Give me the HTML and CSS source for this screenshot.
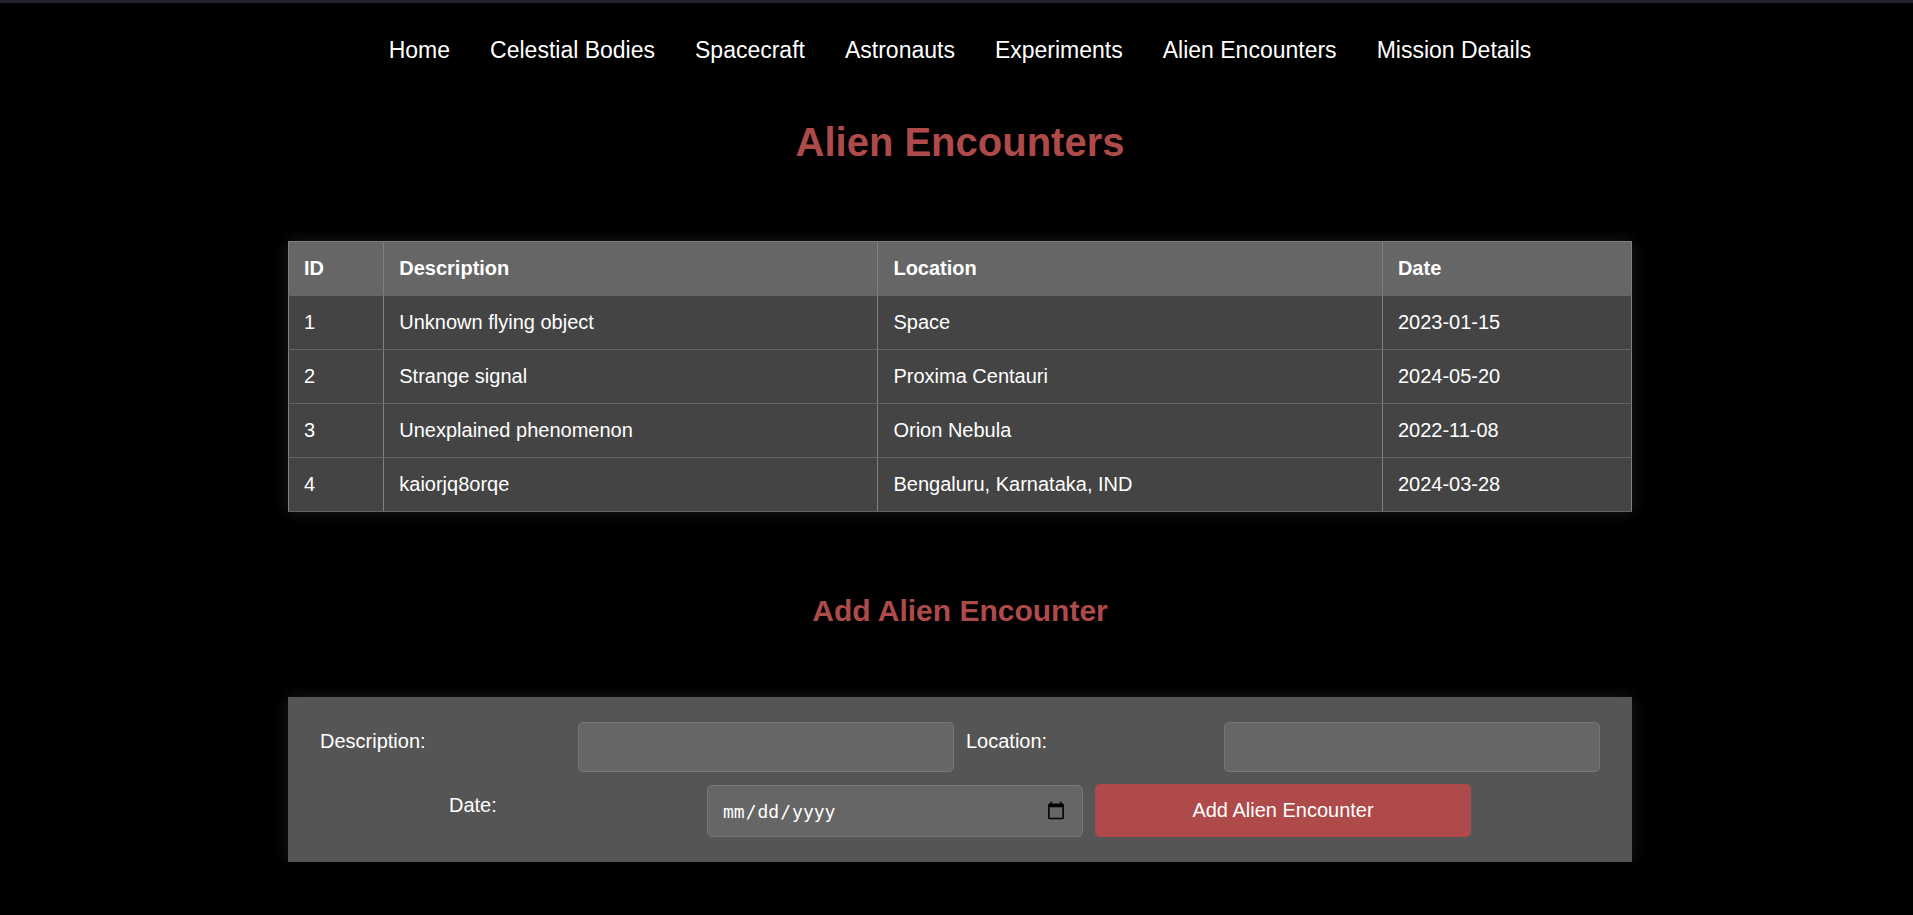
FILE: index.html
```html
<!DOCTYPE html>
<html lang="en">
<head>
<meta charset="utf-8">
<title>Alien Encounters</title>
<link rel="stylesheet" href="styles.css">
</head>
<body>
<header class="site-header">
  <nav class="nav">
    <a href="#">Home</a>
    <a href="#">Celestial Bodies</a>
    <a href="#">Spacecraft</a>
    <a href="#">Astronauts</a>
    <a href="#">Experiments</a>
    <a href="#">Alien Encounters</a>
    <a href="#">Mission Details</a>
  </nav>
</header>
<main class="content">
  <h1 class="title">Alien Encounters</h1>
  <table class="encounters">
    <thead>
      <tr><th>ID</th><th>Description</th><th>Location</th><th>Date</th></tr>
    </thead>
    <tbody>
      <tr><td>1</td><td>Unknown flying object</td><td>Space</td><td>2023-01-15</td></tr>
      <tr><td>2</td><td>Strange signal</td><td>Proxima Centauri</td><td>2024-05-20</td></tr>
      <tr><td>3</td><td>Unexplained phenomenon</td><td>Orion Nebula</td><td>2022-11-08</td></tr>
      <tr><td>4</td><td>kaiorjq8orqe</td><td>Bengaluru, Karnataka, IND</td><td>2024-03-28</td></tr>
    </tbody>
  </table>
  <h2 class="subtitle">Add Alien Encounter</h2>
  <form class="form">
    <label class="label" for="description">Description:</label>
    <input class="field" type="text" id="description">
    <label class="label" for="location">Location:</label>
    <input class="field" type="text" id="location">
    <label class="label" for="date">Date:</label>
    <input class="field field-date" type="date" id="date">
    <button class="submit" type="submit">Add Alien Encounter</button>
  </form>
</main>
</body>
</html>
```
FILE: styles.css
```css
* {
  box-sizing: border-box;
}

body {
  margin: 0;
  padding-left: 7px;
  border-top: 3px solid #212529;
  background: #000;
  color: #fff;
  font-family: "Liberation Sans", Arial, sans-serif;
  font-size: 20px;
}

.site-header {
  padding: 34px 0 56px;
}

.nav {
  display: flex;
  flex-wrap: wrap;
  justify-content: center;
  gap: 40px;
  font-size: 23px;
}

.nav a {
  color: #fff;
  text-decoration: none;
}

.content {
  max-width: 1344px;
  margin: 0 auto;
}

.title,
.subtitle {
  margin: 0;
  color: #af4a4a;
  text-align: center;
}

.title {
  margin-bottom: 76px;
  font-size: 40px;
}

.subtitle {
  margin: 82px 0 69px;
  font-size: 30px;
}

.encounters {
  width: 100%;
  border-collapse: collapse;
  background: #444;
  box-shadow: 0 0 15px rgba(255, 255, 255, 0.1);
}

.encounters th,
.encounters td {
  padding: 15px;
  border: 1px solid #808080;
  border-bottom-color: #666;
  line-height: 23px;
  text-align: left;
}

.encounters th {
  background: #666;
}

.form {
  display: flex;
  flex-wrap: wrap;
  justify-content: center;
  align-items: flex-end;
  gap: 12px;
  padding: 25px 31px;
  background: #555;
  box-shadow: 0 0 15px rgba(255, 255, 255, 0.1);
}

.label {
  width: 246px;
  padding-bottom: 11px;
  align-self: center;
}

.field,
.submit {
  width: 376px;
  border-radius: 5px;
  color: #fff;
}

.field {
  height: 50px;
  padding: 12px 14px;
  border: 1px solid #777;
  background: #666;
  font: 20px "Liberation Sans", Arial, sans-serif;
}

.field-date {
  height: 52px;
  font: 18px "DejaVu Sans Mono", monospace;
}

.field-date::-webkit-calendar-picker-indicator {
  width: 20px;
  height: 20px;
}

.submit {
  height: 53px;
  border: 0;
  background: #af4a4a;
  font: 20px "Liberation Sans", Arial, sans-serif;
}
```
